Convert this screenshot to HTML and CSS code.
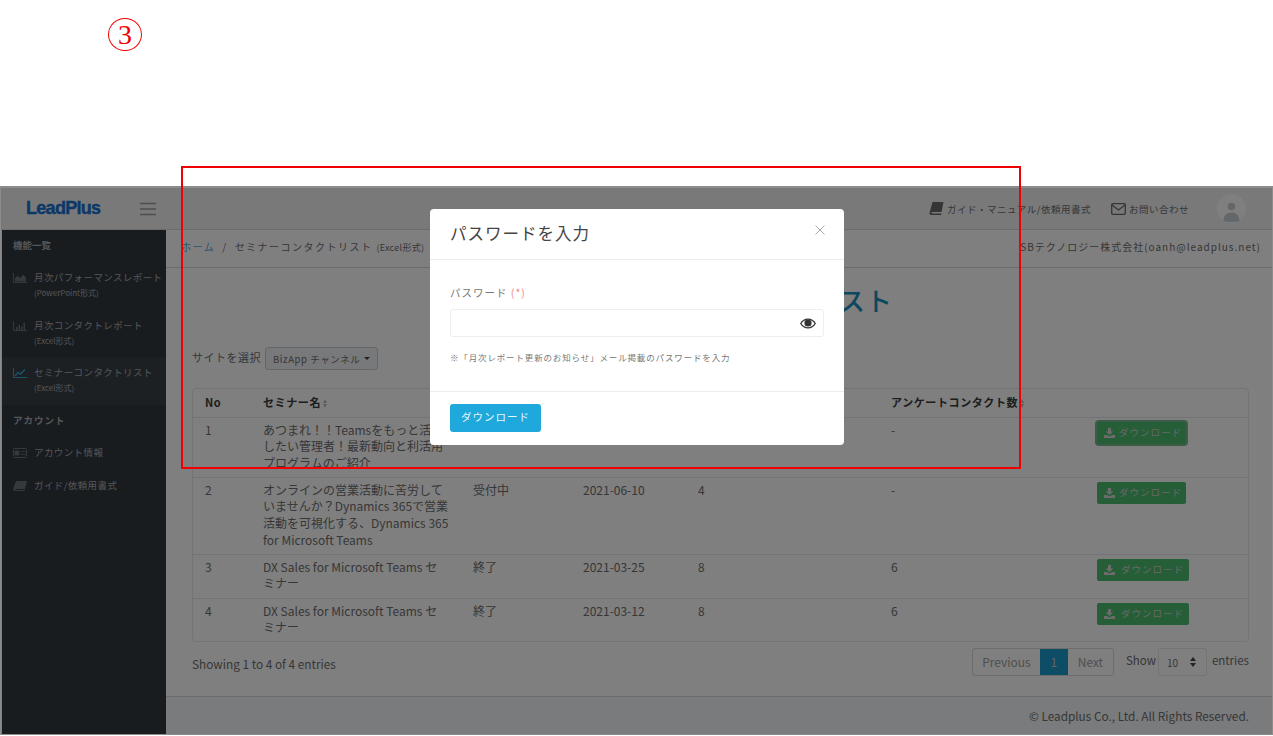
FILE: index.html
```html
<!DOCTYPE html>
<html lang="ja">

<head>
    <meta charset="UTF-8">
    <meta name="viewport" content="width=device-width, initial-scale=1.0">
    <title>セミナーコンタクトリスト</title>
    <link rel="stylesheet" href="styles.css">
</head>

<body>

    <div class="caption">
        <span class="step">3</span>
    </div>

    <div class="frame">
        <header class="topbar">
            <div class="brand">
                <span class="logo">LeadPlus</span>
                <svg class="burger" width="16" height="14" viewBox="0 0 16 14">
                    <path d="M0 1.5h16M0 7h16M0 12.5h16" stroke="#9a9a9a" stroke-width="1.6" />
                </svg>
            </div>
            <nav class="toplinks">
                <a class="toplink">
                    <svg width="15" height="13" viewBox="0 0 14 13">
                        <path d="M3 0h11l-2 10H2.600c-.9 0-.9 1.400 0 1.400H12l-.3 1.600H2C.5 13-.3 11.800.1 10.400z" fill="#6b6b6b" />
                    </svg>
                    ガイド・マニュアル/依頼用書式
                </a>
                <a class="toplink">
                    <svg width="15" height="12" viewBox="0 0 15 12">
                        <rect x=".7" y=".7" width="13.600" height="10.600" rx="1" fill="none" stroke="#6b6b6b" stroke-width="1.300" />
                        <path d="M1 2l6.500 5L14 2" fill="none" stroke="#6b6b6b" stroke-width="1.300" />
                    </svg>
                    お問い合わせ
                </a>
                <svg class="avatar" width="29" height="29" viewBox="0 0 29 29">
                    <circle cx="14.500" cy="14.500" r="14.500" fill="#ffffff" />
                    <circle cx="14.500" cy="12.500" r="3.800" fill="#c8ced4" />
                    <path d="M6.500 27c0-6 3.500-8.500 8-8.500s8 2.500 8 8.500c-2.300 1.300-13.700 1.300-16 0z" fill="#c8ced4" />
                </svg>
            </nav>
        </header>

        <div class="layout">
            <aside class="sidebar">
                <div class="side-title">機能一覧</div>
                <a class="side-item">
                    <svg class="side-icon" width="14" height="10" viewBox="0 0 14 10">
                        <path d="M.5 0v9.500H14" fill="none" stroke="#6d7278" />
                        <path d="M2 8.500V5l2.500-2 3 2L10 1.500l3 3v4z" fill="#6d7278" />
                    </svg>
                    <span class="side-text">月次パフォーマンスレポート<small>(PowerPoint形式)</small></span>
                </a>
                <a class="side-item">
                    <svg class="side-icon" width="14" height="10" viewBox="0 0 14 10">
                        <path d="M.5 0v9.500H14" fill="none" stroke="#6d7278" />
                        <path d="M3 6h1.500v3H3zM5.500 4H7v5H5.500zM8 5.500h1.500V9H8zM10.500 2H12v7h-1.500z" fill="#6d7278" />
                    </svg>
                    <span class="side-text">月次コンタクトレポート<small>(Excel形式)</small></span>
                </a>
                <a class="side-item active">
                    <svg class="side-icon" width="14" height="10" viewBox="0 0 14 10">
                        <path d="M.5 0v9.500H14" fill="none" stroke="#30a8d8" />
                        <path d="M2 8l3-3.500 2.500 1.500L12 1.500" fill="none" stroke="#30a8d8" stroke-width="1.400" />
                    </svg>
                    <span class="side-text">セミナーコンタクトリスト<small>(Excel形式)</small></span>
                </a>
                <div class="side-title account">アカウント</div>
                <a class="side-item single">
                    <svg class="side-icon" width="14" height="10" viewBox="0 0 14 10">
                        <rect x=".5" y=".5" width="13" height="9" rx="1" fill="none" stroke="#6d7278" />
                        <path d="M2 3h4v4H2zM8 3.500h4.500M8 6.500h4.500" fill="#6d7278" stroke="#6d7278" stroke-width=".8" />
                    </svg>
                    <span class="side-text">アカウント情報</span>
                </a>
                <a class="side-item single">
                    <svg class="side-icon" width="14" height="10" viewBox="0 0 14 10">
                        <path d="M3 0h11l-2 8H2.600c-.8 0-.8 1 0 1H12l-.3 1H2C.6 10-.2 9 .2 8z" fill="#6d7278" />
                    </svg>
                    <span class="side-text">ガイド/依頼用書式</span>
                </a>
            </aside>

            <div class="main">
                <div class="crumbs">
                    <div class="crumb-path"><span class="crumb-home">ホーム</span><span class="crumb-sep">/</span>セミナーコンタクトリスト <small>(Excel形式)</small></div>
                    <div>SBテクノロジー株式会社(oanh@leadplus.net)</div>
                </div>

                <div class="content">
                    <h1>セミナーコンタクトリスト</h1>

                    <div class="site-select">
                        <span class="site-label">サイトを選択</span>
                        <span class="dropdown">BizApp チャンネル<i class="caret"></i></span>
                    </div>

                    <div class="table-box">
                        <table>
                            <thead>
                                <tr>
                                    <th class="col-no">No</th>
                                    <th class="col-name">セミナー名<i class="sort"></i></th>
                                    <th class="col-status">状況<i class="sort"></i></th>
                                    <th class="col-date">開催日<i class="sort"></i></th>
                                    <th class="col-count">コンタクト数<i class="sort"></i></th>
                                    <th class="col-survey">アンケートコンタクト数<i class="sort"></i></th>
                                    <th></th>
                                </tr>
                            </thead>
                            <tbody>
                                <tr>
                                    <td>1</td>
                                    <td>あつまれ！！Teamsをもっと活用したい管理者！最新動向と利活用プログラムのご紹介</td>
                                    <td>受付中</td>
                                    <td>2021-06-17</td>
                                    <td>4</td>
                                    <td>-</td>
                                    <td><a class="btn-dl focus"><svg width="11" height="10" viewBox="0 0 11 10"><path d="M4 0h3v3.500h2.300L5.500 7 1.700 3.500H4zM0 7h3l2.500 1.500L8 7h3v3H0z" fill="#d8d8d8" /></svg>ダウンロード</a></td>
                                </tr>
                                <tr>
                                    <td>2</td>
                                    <td class="lines">オンラインの営業活動に苦労して<br>いませんか？Dynamics 365で営業<br>活動を可視化する、Dynamics 365<br>for Microsoft Teams</td>
                                    <td>受付中</td>
                                    <td>2021-06-10</td>
                                    <td>4</td>
                                    <td>-</td>
                                    <td><a class="btn-dl"><svg width="11" height="10" viewBox="0 0 11 10"><path d="M4 0h3v3.500h2.300L5.500 7 1.700 3.500H4zM0 7h3l2.500 1.500L8 7h3v3H0z" fill="#d8d8d8" /></svg>ダウンロード</a></td>
                                </tr>
                                <tr>
                                    <td>3</td>
                                    <td>DX Sales for Microsoft Teams セミナー</td>
                                    <td>終了</td>
                                    <td>2021-03-25</td>
                                    <td>8</td>
                                    <td>6</td>
                                    <td><a class="btn-dl wide"><svg width="11" height="10" viewBox="0 0 11 10"><path d="M4 0h3v3.500h2.300L5.500 7 1.700 3.500H4zM0 7h3l2.500 1.500L8 7h3v3H0z" fill="#d8d8d8" /></svg>ダウンロード</a></td>
                                </tr>
                                <tr>
                                    <td>4</td>
                                    <td>DX Sales for Microsoft Teams セミナー</td>
                                    <td>終了</td>
                                    <td>2021-03-12</td>
                                    <td>8</td>
                                    <td>6</td>
                                    <td><a class="btn-dl wide"><svg width="11" height="10" viewBox="0 0 11 10"><path d="M4 0h3v3.500h2.300L5.500 7 1.700 3.500H4zM0 7h3l2.500 1.500L8 7h3v3H0z" fill="#d8d8d8" /></svg>ダウンロード</a></td>
                                </tr>
                            </tbody>
                        </table>
                    </div>

                    <div class="table-foot">
                        <span>Showing 1 to 4 of 4 entries</span>
                        <div class="table-tools">
                            <div class="pager">
                                <span class="page-prev">Previous</span>
                                <span class="page-now">1</span>
                                <span class="page-next">Next</span>
                            </div>
                            <span class="show-label">Show</span>
                            <span class="length">10
                                <svg width="6" height="10" viewBox="0 0 6 10"><path d="M3 0l3 4H0zM3 10L0 6h6z" fill="#444" /></svg>
                            </span>
                            <span class="show-label">entries</span>
                        </div>
                    </div>
                </div>

                <footer class="foot">© Leadplus Co., Ltd. All Rights Reserved.</footer>
            </div>
        </div>

        <div class="backdrop"></div>
    </div>

    <div class="modal">
        <div class="modal-head">
            <h2>パスワードを入力</h2>
            <svg class="modal-close" width="10" height="10" viewBox="0 0 10 10">
                <path d="M.5.5l9 9M9.500.5l-9 9" stroke="#aaaaaa" stroke-width="1" />
            </svg>
        </div>
        <div class="modal-body">
            <label class="pw-label">パスワード <span class="req">(*)</span></label>
            <div class="pw-field">
                <svg width="16" height="11" viewBox="0 0 16 11">
                    <path d="M0 5.500C2 2 4.800 .5 8 .5s6 1.500 8 5c-2 3.500-4.800 5-8 5s-6-1.500-8-5z" fill="#333" />
                    <path d="M1.500 5.500C3.200 3 5.500 1.800 8 1.800s4.800 1.200 6.500 3.700C12.800 8 10.500 9.200 8 9.200S3.200 8 1.500 5.500z" fill="#fff" />
                    <circle cx="8" cy="5" r="3.600" fill="#333" />
                </svg>
            </div>
            <p class="pw-note">※「月次レポート更新のお知らせ」メール掲載のパスワードを入力</p>
        </div>
        <div class="modal-foot">
            <button type="button">ダウンロード</button>
        </div>
    </div>

    <div class="redbox"></div>

</body>

</html>
```

FILE: styles.css
```css
* {
    margin: 0;
    padding: 0;
    box-sizing: border-box;
}

body {
    font-family: "Noto Sans CJK JP", "Noto Sans", sans-serif;
    background-color: #ffffff;
    color: #6e6e6e;
    font-size: 12px;
    height: 736px;
    overflow: hidden;
}

.caption {
    height: 186px;
    padding: 18px 0 0 108px;
}

.step {
    display: flex;
    justify-content: center;
    align-items: center;
    width: 34px;
    height: 33px;
    border: 1.5px solid #f00000;
    border-radius: 50%;
    color: #f00000;
    font-family: "Liberation Serif", serif;
    font-size: 28px;
}

.frame {
    position: relative;
    height: 549px;
    border: 1px solid #8c8c8c;
    border-top-width: 2px;
    display: flex;
    flex-direction: column;
}

.backdrop {
    position: absolute;
    inset: 0;
    background-color: rgba(0, 0, 0, 0.5);
}

/* top bar */
.topbar {
    height: 42px;
    flex-shrink: 0;
    display: flex;
    justify-content: space-between;
    align-items: center;
    background-color: #f2f2f2;
    border-bottom: 1px solid #d8d8d8;
    padding-right: 26px;
}

.brand {
    display: flex;
    align-items: center;
    padding-left: 25px;
}

.logo {
    width: 114px;
    font-family: "Liberation Sans", sans-serif;
    font-size: 18px;
    font-weight: bold;
    letter-spacing: -0.7px;
    color: #1670d0;
    -webkit-text-stroke: 0.4px #1670d0;
}

.toplinks {
    display: flex;
    align-items: center;
}

.toplink {
    display: flex;
    align-items: center;
    gap: 3px;
    font-size: 9.500px;
    letter-spacing: 0.5px;
    margin-right: 20px;
}

.toplink:nth-child(2) {
    margin-right: 28px;
}

/* sidebar */
.layout {
    flex: 1;
    display: flex;
    min-height: 0;
}

.sidebar {
    width: 164px;
    margin-left: 1px;
    flex-shrink: 0;
    background-color: #32383f;
    color: #a8adb2;
}

.side-title {
    height: 32px;
    padding: 8px 0 0 11px;
    font-size: 9.500px;
    font-weight: bold;
}

.side-title.account {
    height: 38px;
    padding-top: 8px;
    letter-spacing: 1px;
}

.side-item {
    display: flex;
    height: 47.500px;
    padding: 8px 0 0 11px;
    font-size: 9.500px;
    letter-spacing: 0.4px;
}

.side-item.single {
    height: 33px;
    padding-top: 2px;
}

.side-item.active {
    background-color: #3a4047;
}

.side-icon {
    margin: 3px 7px 0 0;
    flex-shrink: 0;
}

.side-text {
    line-height: 15px;
    white-space: nowrap;
}

.side-text small {
    display: block;
    font-size: 8px;
    letter-spacing: 0;
}

/* main area */
.main {
    flex: 1;
    display: flex;
    flex-direction: column;
    min-width: 0;
}

.crumbs {
    height: 38px;
    flex-shrink: 0;
    display: flex;
    justify-content: space-between;
    align-items: center;
    padding: 0 11px 4px 15px;
    border-bottom: 1px solid #d8d8d8;
    font-size: 10px;
    letter-spacing: 1px;
}

.crumb-path {
    letter-spacing: 1.500px;
}

.crumbs small {
    font-size: 9px;
    letter-spacing: 0.3px;
}

.crumb-home {
    color: #4fb0d8;
}

.crumb-sep {
    margin: 0 7px;
}

.content {
    flex: 1;
    padding: 0 23px 0 26px;
}

h1 {
    color: #1a90bc;
    font-size: 26px;
    font-weight: 500;
    text-align: center;
    line-height: 34px;
    padding: 15px 0 0 21px;
    letter-spacing: 1px;
}

.site-select {
    display: flex;
    align-items: center;
    gap: 4px;
    margin-top: 30px;
}

.site-label {
    font-size: 11px;
    letter-spacing: 0.5px;
    padding-bottom: 3px;
}

.dropdown {
    display: flex;
    align-items: center;
    justify-content: space-between;
    width: 113px;
    height: 23px;
    padding: 0 7px;
    border: 1px solid #c8ccd0;
    border-radius: 3px;
    background-color: #f0f2f4;
    font-size: 9.500px;
    letter-spacing: 0.6px;
    white-space: nowrap;
}

.caret {
    border-top: 3.500px solid #444;
    border-left: 3.500px solid transparent;
    border-right: 3.500px solid transparent;
}

/* table */
.table-box {
    margin-top: 18px;
    border: 1px solid #e8e8e8;
    border-radius: 4px;
}

table {
    width: 100%;
    border-collapse: collapse;
    table-layout: fixed;
}

th,
td {
    text-align: left;
    vertical-align: top;
    padding: 4px 13px 0 12px;
    line-height: 16.700px;
}

td.lines {
    white-space: nowrap;
}

th {
    height: 28px;
    padding-top: 5px;
    color: #3a3a3a;
    font-size: 11px;
    font-weight: bold;
    letter-spacing: 0.6px;
    border-bottom: 1px solid #e8e8e8;
    white-space: nowrap;
}

tbody tr {
    border-bottom: 1px solid #e8e8e8;
}

tbody tr:last-child {
    border-bottom: none;
}

tbody tr:nth-child(1) {
    height: 60px;
}

tbody tr:nth-child(2) {
    height: 77px;
}

tbody tr:nth-child(3) {
    height: 44px;
}

tbody tr:nth-child(4) {
    height: 43px;
}

.col-no {
    width: 58px;
}

.col-name {
    width: 210px;
}

.col-status {
    width: 110px;
}

.col-date {
    width: 115px;
}

.col-count {
    width: 193px;
}

.col-survey {
    width: 206px;
}

.sort {
    display: inline-flex;
    flex-direction: column;
    gap: 1px;
    margin-left: 2px;
    vertical-align: middle;
    margin-bottom: 2px;
}

.sort::before,
.sort::after {
    content: "";
    border-left: 2.500px solid transparent;
    border-right: 2.500px solid transparent;
}

.sort::before {
    border-bottom: 4px solid #bcbcbc;
}

.sort::after {
    border-top: 4px solid #bcbcbc;
}

.btn-dl {
    display: flex;
    align-items: center;
    gap: 4px;
    width: 89px;
    height: 22px;
    padding-left: 7px;
    border-radius: 2px;
    background-color: #4cbc70;
    color: #d0d0d0;
    font-size: 9.500px;
    letter-spacing: 1px;
    white-space: nowrap;
}

.btn-dl.wide {
    width: 92px;
    gap: 6px;
}

.btn-dl.focus {
    box-shadow: 0 0 0 2px #78b890;
}

.table-foot {
    display: flex;
    justify-content: space-between;
    margin-top: 6px;
}

.table-foot > span {
    margin-top: 7px;
    font-size: 11.800px;
}

.table-tools {
    display: flex;
    align-items: flex-start;
}

.pager {
    display: flex;
    height: 28px;
    border: 1px solid #d8d8d8;
    border-radius: 3px;
    align-items: stretch;
    line-height: 26px;
    color: #a0a0a0;
}

.page-prev {
    width: 67px;
    text-align: center;
}

.page-now {
    width: 28px;
    text-align: center;
    background-color: #1a9ccc;
    color: #c8c8c8;
}

.page-next {
    width: 45px;
    text-align: center;
}

.show-label {
    font-size: 11.500px;
    line-height: 24px;
    margin-left: 12px;
}

.length {
    display: flex;
    align-items: center;
    justify-content: space-between;
    width: 49px;
    height: 28px;
    margin-left: 2px;
    padding: 0 10px 0 8px;
    border: 1px solid #e8e8e8;
    border-radius: 3px;
    font-size: 10px;
}

.length + .show-label {
    margin-left: 5px;
}

.foot {
    height: 38px;
    flex-shrink: 0;
    border-top: 1px solid #d8d8d8;
    background-color: #f4f6f8;
    padding: 10px 23px 0 0;
    font-size: 11.800px;
    text-align: right;
}

/* modal */
.modal {
    position: absolute;
    left: 430px;
    top: 209px;
    width: 414px;
    height: 236px;
    background-color: #ffffff;
    border-radius: 4px;
    color: #777777;
}

.modal-head {
    height: 51px;
    padding: 0 20px;
    display: flex;
    justify-content: space-between;
    border-bottom: 1px solid #ececec;
}

h2 {
    font-size: 16.500px;
    font-weight: 400;
    letter-spacing: 1px;
    color: #444444;
    line-height: 49px;
}

.modal-close {
    margin-top: 16px;
    margin-right: -1px;
}

.modal-body {
    height: 131px;
    padding: 24px 20px 0;
}

.pw-label {
    display: block;
    line-height: 18px;
    font-size: 10.500px;
    letter-spacing: 1px;
}

.req {
    color: #f08888;
}

.pw-field {
    display: flex;
    justify-content: flex-end;
    align-items: center;
    height: 28px;
    margin-top: 7px;
    padding-right: 7px;
    border: 1px solid #eeeeee;
    border-radius: 3px;
}

.pw-note {
    font-size: 8.500px;
    letter-spacing: 0.85px;
    margin-top: 12px;
    line-height: 16px;
}

.modal-foot {
    padding: 12px 20px 0;
    border-top: 1px solid #ececec;
}

button {
    width: 91px;
    height: 28px;
    padding-bottom: 3px;
    background-color: #1fa8dc;
    color: #e8f6fc;
    border: none;
    border-radius: 3px;
    font-family: inherit;
    font-size: 10.500px;
    letter-spacing: 1px;
}

.redbox {
    position: absolute;
    left: 181px;
    top: 166px;
    width: 840px;
    height: 303px;
    border: 2px solid #f00000;
}
```
